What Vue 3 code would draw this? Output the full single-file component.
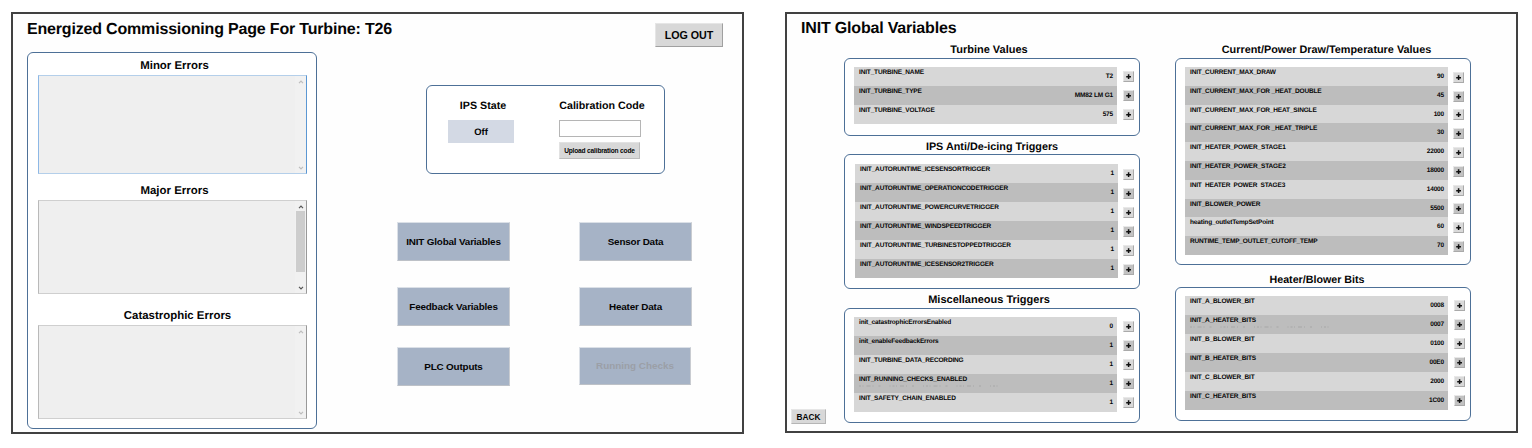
<script setup>
const errorBoxes = [
  { title: 'Minor Errors', kind: 'minor' },
  { title: 'Major Errors', kind: 'major' },
  { title: 'Catastrophic Errors', kind: 'catastrophic' }
]

const pages = [
  { label: 'INIT Global Variables' },
  { label: 'Sensor Data' },
  { label: 'Feedback Variables' },
  { label: 'Heater Data' },
  { label: 'PLC Outputs' },
  { label: 'Running Checks', disabled: true }
]

const columns = [
  [
    {
      title: 'Turbine Values', kind: 'turbine',
      rows: [
        ['INIT_TURBINE_NAME', 'T2'],
        ['INIT_TURBINE_TYPE', 'MM82 LM G1'],
        ['INIT_TURBINE_VOLTAGE', '575']
      ]
    },
    {
      title: 'IPS Anti/De-icing Triggers', kind: 'icing',
      rows: [
        ['INIT_AUTORUNTIME_ICESENSORTRIGGER', '1'],
        ['INIT_AUTORUNTIME_OPERATIONCODETRIGGER', '1'],
        ['INIT_AUTORUNTIME_POWERCURVETRIGGER', '1'],
        ['INIT_AUTORUNTIME_WINDSPEEDTRIGGER', '1'],
        ['INIT_AUTORUNTIME_TURBINESTOPPEDTRIGGER', '1'],
        ['INIT_AUTORUNTIME_ICESENSOR2TRIGGER', '1']
      ]
    },
    {
      title: 'Miscellaneous Triggers', kind: 'misc',
      rows: [
        ['init_catastrophicErrorsEnabled', '0'],
        ['init_enableFeedbackErrors', '1'],
        ['INIT_TURBINE_DATA_RECORDING', '1'],
        ['INIT_RUNNING_CHECKS_ENABLED', '1', true],
        ['INIT_SAFETY_CHAIN_ENABLED', '1']
      ]
    }
  ],
  [
    {
      title: 'Current/Power Draw/Temperature Values', kind: 'power',
      rows: [
        ['INIT_CURRENT_MAX_DRAW', '90'],
        ['INIT_CURRENT_MAX_FOR _HEAT_DOUBLE', '45'],
        ['INIT_CURRENT_MAX_FOR_HEAT_SINGLE', '100'],
        ['INIT_CURRENT_MAX_FOR _HEAT_TRIPLE', '30'],
        ['INIT_HEATER_POWER_STAGE1', '22000'],
        ['INIT_HEATER_POWER_STAGE2', '18000'],
        ['INIT  HEATER  POWER  STAGE3', '14000'],
        ['INIT_BLOWER_POWER', '5500'],
        ['heating_outletTempSetPoint', '60'],
        ['RUNTIME_TEMP_OUTLET_CUTOFF_TEMP', '70']
      ]
    },
    {
      title: 'Heater/Blower Bits', kind: 'bits',
      rows: [
        ['INIT_A_BLOWER_BIT', '0008'],
        ['INIT_A_HEATER_BITS', '0007', true],
        ['INIT_B_BLOWER_BIT', '0100'],
        ['INIT_B_HEATER_BITS', '00E0'],
        ['INIT_C_BLOWER_BIT', '2000'],
        ['INIT_C_HEATER_BITS', '1C00']
      ]
    }
  ]
]
</script>

<template>
  <main class="screen">
    <section class="window commissioning">
      <div class="errors-side">
        <h1>Energized Commissioning Page For Turbine: T26</h1>
        <div class="frame errors">
          <div v-for="box in errorBoxes" :key="box.kind" class="error-group" :class="box.kind">
            <h2>{{ box.title }}</h2>
            <div class="error-box">
              <div class="scrollbar">
                <svg class="chevron" viewBox="0 0 6 4"><path d="M1 3.2 3 1.2 5 3.2" /></svg>
                <span class="thumb"></span>
                <svg class="chevron" viewBox="0 0 6 4"><path d="M1 .8 3 2.8 5 .8" /></svg>
              </div>
            </div>
          </div>
        </div>
      </div>
      <div class="controls">
        <button class="logout">LOG OUT</button>
        <div class="frame calibration">
          <div class="state">
            <h3>IPS State</h3>
            <div class="state-value">Off</div>
          </div>
          <div class="code">
            <h3>Calibration Code</h3>
            <input class="code-input" />
            <button class="upload">Upload calibration code</button>
          </div>
        </div>
        <nav class="pages">
          <button v-for="page in pages" :key="page.label" class="page" :class="{ disabled: page.disabled }">{{ page.label }}</button>
        </nav>
      </div>
    </section>

    <section class="window variables">
      <div class="rail">
        <h1>INIT Global Variables</h1>
        <button class="back">BACK</button>
      </div>
      <div v-for="(groups, c) in columns" :key="c" class="column">
        <div v-for="group in groups" :key="group.kind" class="group" :class="group.kind">
          <h3>{{ group.title }}</h3>
          <div class="frame card">
            <div v-for="row in group.rows" :key="row[0]" class="row">
              <div class="cell">
                <span class="name">{{ row[0] }}</span>
                <span class="value">{{ row[1] }}</span>
                <svg v-if="row[2]" class="specks" viewBox="0 0 140 2"><path d="M0 1H140" /></svg>
              </div>
              <button class="plus"><svg viewBox="0 0 9 9"><path d="M2.2 4.7h4.8M4.6 2.3v4.8" /></svg></button>
            </div>
          </div>
        </div>
      </div>
    </section>
  </main>
</template>

<style>
body {
  background: #fff;
}
</style>

<style scoped>
.screen {
  box-sizing: border-box;
  width: 1532px;
  height: 448px;
  padding: 12px 0 0 11px;
  display: flex;
  gap: 41px;
  align-items: flex-start;
  overflow: hidden;
  color: #050505;
  font-family: "Liberation Sans", Arial, sans-serif;
  font-weight: 700;
  text-rendering: geometricPrecision;
}
.screen * {
  box-sizing: border-box;
}
h1, h2, h3 {
  margin: 0;
  white-space: nowrap;
  font-weight: 700;
}
h1 {
  font-size: 16px;
  letter-spacing: -.18px;
  line-height: 20px;
  height: 18px;
}
h2 {
  font-size: 11.45px;
  line-height: 14px;
  text-align: center;
}
h3 {
  font-size: 11px;
  line-height: 13px;
  text-align: center;
}
button {
  margin: 0;
  padding: 0;
  border: 1px solid;
  color: inherit;
  font: inherit;
  white-space: nowrap;
  text-align: center;
}
.window {
  flex: none;
  display: flex;
  background: #fefefe;
  border: 2px solid #414141;
}
.frame {
  border: 1px solid #4d7097;
  border-radius: 6px;
  background: #fff;
}

.commissioning {
  width: 733px;
  height: 422px;
  padding: 6px 0 0 14px;
}
.errors-side {
  width: 290px;
  flex: none;
}
.errors {
  height: 377px;
  margin-top: 14px;
  padding: 6px 9px 0 10px;
}
.error-group.major {
  margin-top: 10px;
}
.error-group.catastrophic {
  margin-top: 15px;
}
.error-group h2 {
  margin-bottom: 2px;
  padding-left: 4px;
}
.error-group.catastrophic h2 {
  padding-left: 10px;
}
.error-box {
  display: flex;
  justify-content: flex-end;
  height: 94px;
  border: 1px solid #cfcfcf;
  border-left-color: #b9b9b9;
  border-right-color: #999;
  background: #efefef;
}
.minor .error-box {
  height: 99px;
  border-color: #b4cfea;
  border-left-color: #8db8e6;
  border-right-color: #5b97d3;
}
.scrollbar {
  width: 11px;
  display: flex;
  flex-direction: column;
  justify-content: space-between;
  align-items: center;
  padding: 4px 0 3px;
  background: #f1f1f1;
}
.chevron {
  width: 6px;
  height: 4px;
  flex: none;
}
.chevron path {
  fill: none;
  stroke: #bdbdbd;
  stroke-width: 1.2;
}
.major .chevron path {
  stroke: #555;
}
.thumb {
  display: none;
}
.major .thumb {
  display: block;
  width: 9px;
  height: 61px;
  margin: 2px 0 auto;
  background: #cdcdcd;
}

.controls {
  width: 425px;
  display: flex;
  flex-direction: column;
}
.logout {
  align-self: flex-end;
  width: 68px;
  height: 24px;
  margin: 3px 19px 0 0;
  font-size: 10.7px;
  background: #d8d8d8;
  border-color: #e6e6e6 #a0a0a0 #a0a0a0 #e6e6e6;
}
.calibration {
  width: 239px;
  height: 89px;
  margin: 38px 0 0 109px;
  padding: 13px 19px 0 21px;
  display: flex;
  justify-content: space-between;
}
.calibration h3 {
  font-size: 10.7px;
  line-height: 15px;
  height: 13px;
}
.state {
  width: 66px;
}
.state h3 {
  padding-left: 4px;
}
.state-value {
  height: 23px;
  margin-top: 8px;
  background: #d3d9e4;
  font-size: 9.4px;
  line-height: 24px;
  text-align: center;
}
.code {
  width: 86px;
  display: flex;
  flex-direction: column;
}
.code-input {
  width: 82px;
  height: 17px;
  margin: 8px 0 0;
  padding: 0;
  border: 1px solid #b5b5b5;
  border-radius: 0;
  background: #fff;
}
.upload {
  width: 81px;
  height: 17px;
  margin-top: 5px;
  font-size: 6.6px;
  letter-spacing: -.18px;
  background: #d8d8d8;
  border-color: #e2e2e2 #bcbcbc #bcbcbc #e2e2e2;
}
.pages {
  display: grid;
  grid-template-columns: 113px 113px;
  grid-template-rows: 65px 60px 39px;
  column-gap: 69px;
  margin: 48px 0 0 80px;
}
.page {
  height: 39px;
  padding-bottom: 1px;
  font-size: 9.9px;
  letter-spacing: -.18px;
  background: #a6b3c6;
  border-color: #dbe0e7 #c9ccd1 #bdc1c7 #dbe0e7;
}
.page.disabled {
  width: 112px;
  height: 38px;
  color: #9b9fa7;
  letter-spacing: 0;
}

.variables {
  width: 733px;
  height: 421px;
  padding-top: 5px;
}
.rail {
  width: 57px;
  flex: none;
  display: flex;
  flex-direction: column;
  justify-content: space-between;
  padding: 0 0 7px 4px;
}
.rail h1 {
  padding-left: 10px;
}
.back {
  width: 35px;
  height: 15px;
  font-size: 8.3px;
  background: #d8d8d8;
  border-color: #e6e6e6 #b5b5b5 #b5b5b5 #e6e6e6;
}
.column {
  width: 296px;
  padding-top: 25px;
}
.column + .column {
  margin-left: 35px;
}
.card {
  margin-top: 1px;
  padding: 8px 5px 0 9px;
}
.row {
  height: 19px;
  display: flex;
  align-items: center;
}
.cell {
  position: relative;
  width: 263px;
  height: 100%;
  display: flex;
  justify-content: space-between;
  padding: 0 4px 0 5px;
  background: #d7d7d7;
  font-size: 6.5px;
  letter-spacing: -.16px;
}
.row:nth-child(even) .cell {
  background: #bdbdbd;
}
.name {
  line-height: 11px;
  white-space: pre;
}
.value {
  line-height: 19px;
}
.plus {
  width: 11px;
  height: 11px;
  margin-left: 6px;
  background: #d9d9d9;
  border-color: #e8e8e8 #aaa #aaa #e8e8e8;
  display: flex;
}
.row:nth-child(even) .plus {
  background: #c2c2c2;
}
.plus svg {
  width: 9px;
  height: 9px;
}
.plus path {
  stroke: #111;
  stroke-width: 1.5;
}
.specks {
  position: absolute;
  left: 5px;
  top: 11px;
  width: 140px;
  height: 2px;
}
.specks path {
  stroke: #9a9a9a;
  stroke-width: .6;
  stroke-dasharray: 2 1.5 1 3 4 2 1 5 2 9 1 2;
}
.turbine h3,
.misc h3 {
  padding-right: 6px;
}
.turbine .card {
  height: 78px;
}
.icing {
  margin-top: 4px;
}
.icing h3 {
  font-size: 10.8px;
  line-height: 14px;
  height: 13px;
}
.icing .card {
  height: 135px;
  padding-left: 10px;
  padding-top: 9px;
}
.icing .plus {
  margin: 1px 0 0 5px;
}
.misc {
  margin-top: 4px;
}
.misc h3 {
  line-height: 14px;
  height: 13px;
}
.misc .card {
  height: 115px;
  margin-top: 2px;
}
.power h3 {
  padding-left: 7px;
  font-size: 10.85px;
}
.power .card {
  height: 207px;
}
.power .row {
  height: 18.8px;
}
.power .plus {
  margin: 2px 0 0 5px;
}
.bits {
  margin-top: 8px;
}
.bits h3 {
  padding-right: 12px;
  font-size: 10.7px;
  line-height: 14px;
  height: 13px;
}
.bits .card {
  height: 134px;
}
</style>
